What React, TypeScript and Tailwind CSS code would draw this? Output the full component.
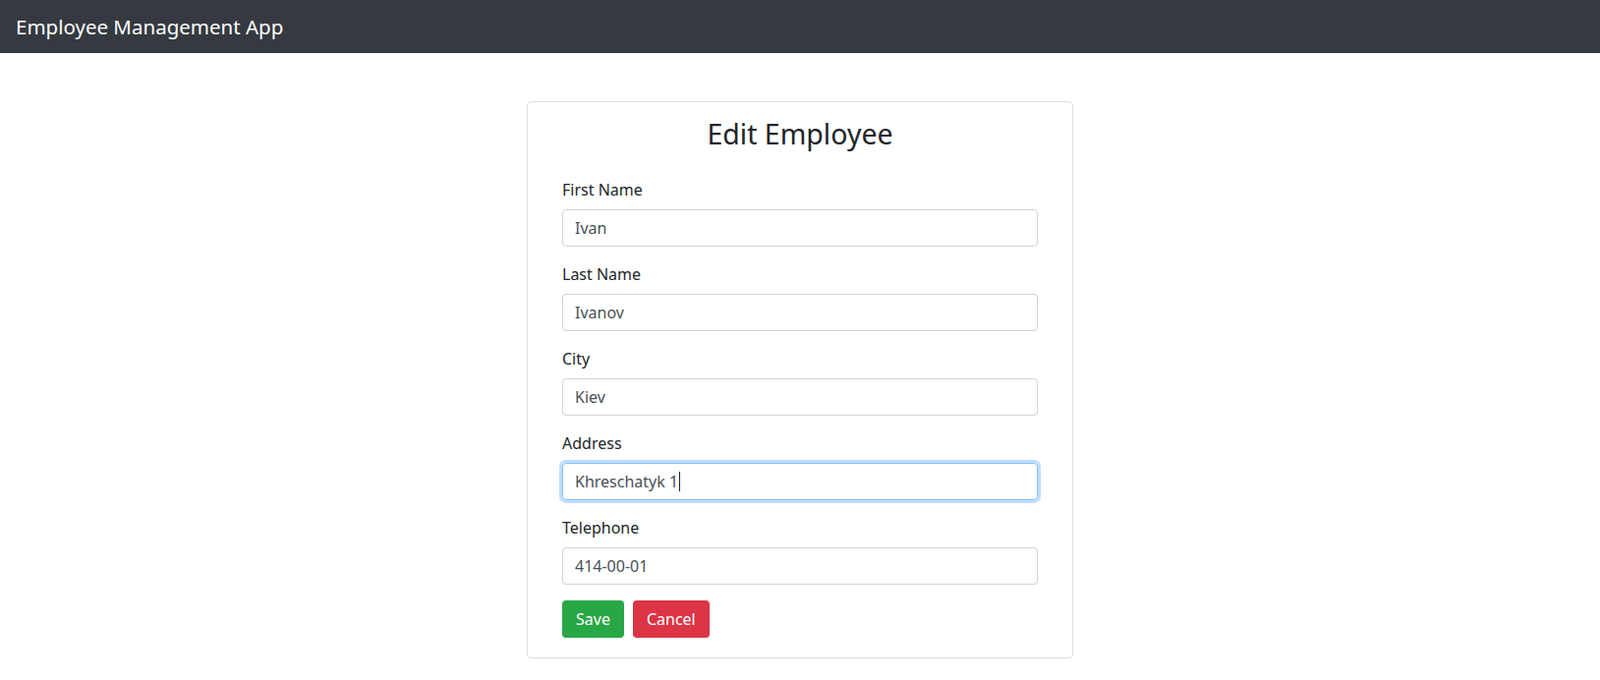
import React from 'react';

const fields = [
  { label: 'First Name', value: 'Ivan' },
  { label: 'Last Name', value: 'Ivanov' },
  { label: 'City', value: 'Kiev' },
  { label: 'Address', value: 'Khreschatyk 1', focused: true },
  { label: 'Telephone', value: '414-00-01' },
];

export default function App() {
  return (
    <div className="min-h-screen bg-white text-[#212529] font-['Noto_Sans',sans-serif] text-[16px]">
      {/* Navbar */}
      <header className="h-[54px] bg-[#343a40] flex items-center px-4">
        <span className="text-white text-[20.5px] leading-none">Employee Management App</span>
      </header>

      <main className="flex justify-center pt-[49px]">
        <div className="w-[556px] border border-[#dfdfdf] rounded-[4px] px-[35px] pt-[15px] pb-[20px]">
          <h3 className="text-center text-[28.5px] leading-[34px] mb-[28px]">Edit Employee</h3>

          <form onSubmit={(e) => e.preventDefault()}>
            {fields.map((f) => (
              <div key={f.label} className="mb-[16px]">
                <label className="block leading-[24px] mb-[8px]">{f.label}</label>
                {f.focused ? (
                  <div className="h-[38px] w-full rounded-[4px] border border-[#80bdff] shadow-[0_0_0_3px_rgba(0,123,255,0.25)] px-3 flex items-center text-[#495057]">
                    <span>{f.value}</span>
                    <span className="inline-block w-px h-[20px] bg-[#222] ml-[1px]" />
                  </div>
                ) : (
                  <input
                    readOnly
                    value={f.value}
                    className="h-[38px] w-full rounded-[4px] border border-[#ced4da] px-3 text-[#495057] outline-none"
                  />
                )}
              </div>
            ))}

            <div className="flex gap-[9px]">
              <button className="h-[38px] px-[14px] rounded-[4px] bg-[#28a745] text-white">Save</button>
              <button className="h-[38px] px-[14px] rounded-[4px] bg-[#dc3545] text-white">Cancel</button>
            </div>
          </form>
        </div>
      </main>
    </div>
  );
}
